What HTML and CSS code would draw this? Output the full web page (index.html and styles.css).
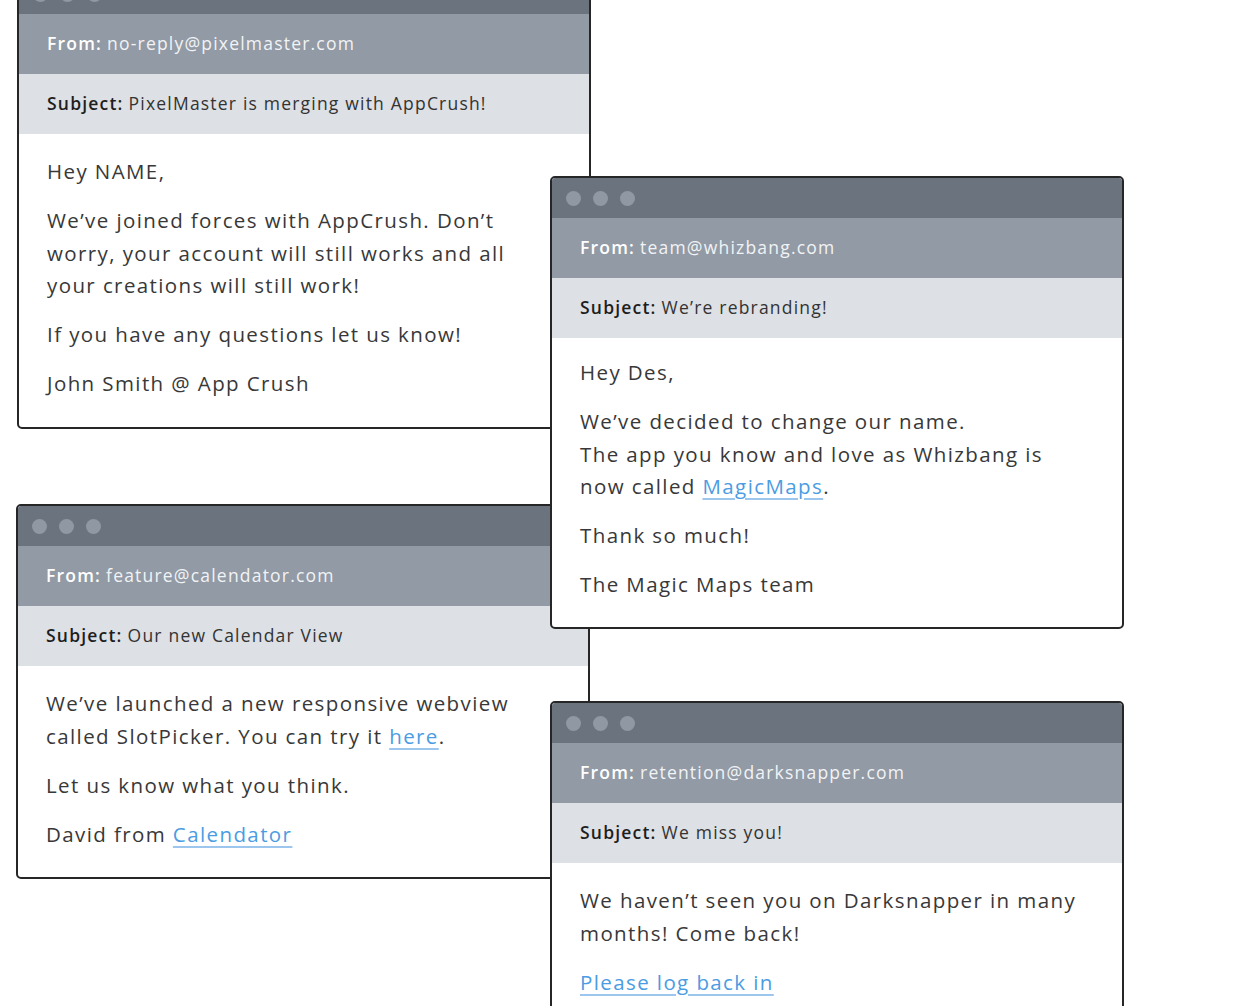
FILE: index.html
```html
<!DOCTYPE html>
<html>
<head>
    <title>Rebranding emails</title>
    <link rel="stylesheet" href="styles.css">
</head>

<body>
    <div class="canvas">
        <div class="window win-pixel">
            <div class="titlebar"><span class="dot"></span><span class="dot"></span><span class="dot"></span></div>
            <div class="from"><b>From:</b> no-reply@pixelmaster.com</div>
            <div class="subject"><b>Subject:</b> PixelMaster is merging with AppCrush!</div>
            <div class="body">
                <p>Hey NAME,</p>
                <p>We’ve joined forces with AppCrush. Don’t<br>worry, your account will still works and all<br>your creations will still work!</p>
                <p>If you have any questions let us know!</p>
                <p>John Smith @ App Crush</p>
            </div>
        </div>

        <div class="window win-calendar">
            <div class="titlebar"><span class="dot"></span><span class="dot"></span><span class="dot"></span></div>
            <div class="from"><b>From:</b> feature@calendator.com</div>
            <div class="subject"><b>Subject:</b> Our new Calendar View</div>
            <div class="body">
                <p>We’ve launched a new responsive webview<br>called SlotPicker. You can try it <a href="#">here</a>.</p>
                <p>Let us know what you think.</p>
                <p>David from <a href="#">Calendator</a></p>
            </div>
        </div>

        <div class="window win-whizbang">
            <div class="titlebar"><span class="dot"></span><span class="dot"></span><span class="dot"></span></div>
            <div class="from"><b>From:</b> team@whizbang.com</div>
            <div class="subject"><b>Subject:</b> We’re rebranding!</div>
            <div class="body">
                <p>Hey Des,</p>
                <p>We’ve decided to change our name.<br>The app you know and love as Whizbang is<br>now called <a href="#">MagicMaps</a>.</p>
                <p>Thank so much!</p>
                <p>The Magic Maps team</p>
            </div>
        </div>

        <div class="window win-dark">
            <div class="titlebar"><span class="dot"></span><span class="dot"></span><span class="dot"></span></div>
            <div class="from"><b>From:</b> retention@darksnapper.com</div>
            <div class="subject"><b>Subject:</b> We miss you!</div>
            <div class="body">
                <p>We haven’t seen you on Darksnapper in many<br>months! Come back!</p>
                <p><a href="#">Please log back in</a></p>
            </div>
        </div>
    </div>
</body>

</html>
```

FILE: styles.css
```css
body {
    margin: 0;
    padding: 0;
    background-color: #fff;
    font-family: "Open Sans", Arial, sans-serif;
    overflow: hidden;
}
.canvas {
    position: relative;
    width: 1240px;
    height: 1006px;
    overflow: hidden;
}
/* windows sit on a free canvas and overlap each other */
.window {
    position: absolute;
    width: 570px;
    border: 2px solid #262626;
    border-radius: 5px;
    background-color: #fff;
    overflow: hidden;
}
.win-pixel {
    left: 17px;
    top: -28px;
}
.win-calendar {
    left: 16px;
    top: 504px;
}
.win-whizbang {
    left: 550px;
    top: 176px;
}
.win-dark {
    left: 550px;
    top: 701px;
}
.titlebar {
    height: 40px;
    background-color: #6b737f;
    display: flex;
    align-items: center;
    gap: 12px;
    padding-left: 14px;
}
.dot {
    width: 15px;
    height: 15px;
    border-radius: 50%;
    background-color: #9098a3;
}
.from,
.subject {
    height: 60px;
    display: flex;
    align-items: center;
    padding-left: 28px;
    padding-bottom: 2px;
    box-sizing: border-box;
    font-size: 17.5px;
    letter-spacing: 1.2px;
}
.from {
    background-color: #929aa5;
    color: #f1f3f5;
}
.from b {
    color: #fff;
    font-weight: 600;
    margin-right: 5px;
}
.subject {
    background-color: #dde0e4;
    color: #333;
}
.subject b {
    color: #1e1e1e;
    font-weight: 600;
    margin-right: 5px;
}
.body {
    padding: 21px 28px 27px;
    font-size: 20.5px;
    letter-spacing: 1.4px;
    line-height: 32.5px;
    color: #383838;
}
.win-whizbang .body {
    padding-top: 18px;
    padding-bottom: 26px;
}
.body p {
    margin: 0 0 16.5px;
}
.body p:last-child {
    margin-bottom: 0;
}
.body a {
    color: #4b9ce2;
    text-decoration: underline;
    text-decoration-color: #9cc6ee;
    text-underline-offset: 4px;
}
```
